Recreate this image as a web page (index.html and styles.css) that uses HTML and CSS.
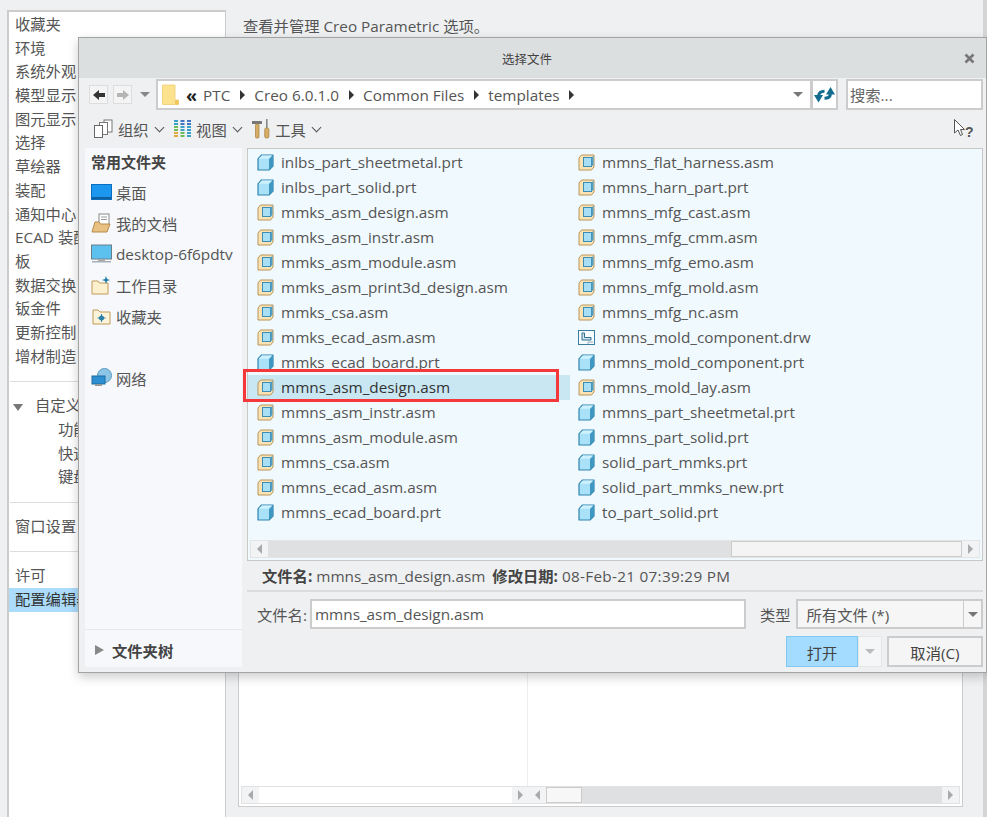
FILE: index.html
```html
<!DOCTYPE html>
<html lang="zh-CN">
<head>
  <meta charset="UTF-8">
  <title>Creo Parametric 选项</title>
  <link rel="stylesheet" href="styles.css">
</head>
<body>

  <svg class="defs" width="0" height="0">
    <symbol id="part" viewBox="0 0 17 17">
      <path d="M1 5 L4.500 1 H16 V12 L12 16 H1 Z" fill="#a9e2f8" stroke="#2f83ad" stroke-width="1.200" stroke-linejoin="round"/>
      <path d="M1.500 4.800 L4.800 1.500 H15 L12 4.800 Z" fill="#cdf1fc"/>
      <path d="M12 5 L16 1 V12 L12 16 Z" fill="#3f97c2"/>
    </symbol>
    <symbol id="asm" viewBox="0 0 17 17">
      <path d="M1 4 L3.500 1 H16 V13 L13.500 16 H1 Z" fill="#fbe3b4" stroke="#b8955a" stroke-linejoin="round"/>
      <rect x="5.500" y="3.500" width="8" height="9" fill="#a9dff5" stroke="#3b8db5"/>
      <path d="M13.500 3.500 L15.500 1.800 V11 L13.500 12.500 Z" fill="#4f9fc6"/>
    </symbol>
    <symbol id="drw" viewBox="0 0 17 17">
      <rect x="0.500" y="1.500" width="16" height="14" fill="#f6fbfd" stroke="#3b7da0"/>
      <path d="M4 4 V11 H13 V8.500 H6.500 V4 Z" fill="#cfe3ee" stroke="#2f6f92"/>
      <path d="M10 15 V13 H15" fill="none" stroke="#99aabb"/>
    </symbol>
  </svg>

  <div class="app">
    <ul class="side">
      <li>收藏夹</li>
      <li>环境</li>
      <li>系统外观</li>
      <li>模型显示</li>
      <li>图元显示</li>
      <li>选择</li>
      <li>草绘器</li>
      <li>装配</li>
      <li>通知中心</li>
      <li>ECAD 装配</li>
      <li>板</li>
      <li>数据交换</li>
      <li>钣金件</li>
      <li>更新控制</li>
      <li>增材制造</li>
      <li class="side-rule rule-wide"></li>
      <li class="side-group"><span class="down"></span>自定义</li>
      <li class="side-sub">功能区</li>
      <li class="side-sub">快速访问</li>
      <li class="side-sub">键盘</li>
      <li class="side-rule rule-mid"></li>
      <li>窗口设置</li>
      <li class="side-rule rule-wide"></li>
      <li>许可</li>
      <li class="side-on">配置编辑器</li>
    </ul>

    <div class="pane">
      <p class="intro">查看并管理 Creo Parametric 选项。</p>
      <div class="table">
        <div class="table-body"></div>
        <div class="table-bars">
          <div class="bar bar-left">
            <span class="bar-btn"><i class="tri-l"></i></span>
            <span class="bar-fill"></span>
            <span class="bar-btn"><i class="tri-r"></i></span>
          </div>
          <div class="bar bar-right">
            <span class="bar-btn"><i class="tri-l"></i></span>
            <span class="bar-thumb"></span>
            <span class="bar-track"></span>
            <span class="bar-btn"><i class="tri-r"></i></span>
          </div>
        </div>
      </div>
    </div>

    <div class="edge"></div>
  </div>

  <div class="dialog">
    <div class="titlebar">
      <span></span>
      <span class="title">选择文件</span>
      <svg class="close" width="11" height="11" viewBox="0 0 11 11"><path d="M1.500 1.500 L9.500 9.500 M9.500 1.500 L1.500 9.500" stroke="#777" stroke-width="2.600"/></svg>
    </div>

    <div class="addr-row">
      <span class="nav-btn"><svg width="14" height="12" viewBox="0 0 14 12"><path d="M1 6 L7 1 V4 H13 V8 H7 V11 Z" fill="#333"/></svg></span>
      <span class="nav-btn off"><svg width="14" height="12" viewBox="0 0 14 12"><path d="M13 6 L7 1 V4 H1 V8 H7 V11 Z" fill="#b5b5b5"/></svg></span>
      <i class="tri-d hist"></i>
      <div class="addr">
        <svg class="addr-folder" width="17" height="21" viewBox="0 0 17 21"><path d="M0.500 1 H13 V16 H16.500 V20.500 H0.500 Z" fill="#fde28e" stroke="#f0d483"/><rect x="13" y="16" width="3.500" height="4.500" fill="#f1c65c"/></svg>
        <span class="crumb-more">«</span>
        <span class="crumb">PTC</span><i class="tri-r dark"></i>
        <span class="crumb">Creo 6.0.1.0</span><i class="tri-r dark"></i>
        <span class="crumb">Common Files</span><i class="tri-r dark"></i>
        <span class="crumb">templates</span><i class="tri-r dark"></i>
        <i class="tri-d addr-drop"></i>
      </div>
      <span class="refresh">
        <svg width="21" height="18" viewBox="0 0 21 18">
          <path d="M10.500 5.200 Q5 5.200 4.500 10 M10.500 12.300 Q16 12.300 16.500 8" fill="none" stroke="#146c8f" stroke-width="3"/>
          <path d="M0 9 H9 L4.500 16.500 Z M12 8.500 H21 L16.500 1 Z" fill="#146c8f"/>
        </svg>
      </span>
      <input class="search" type="text" placeholder="搜索...">
    </div>

    <div class="tool-row">
      <span class="tool">
        <svg width="21" height="20" viewBox="0 0 21 20"><rect x="11" y="1" width="8" height="12" fill="#fff" stroke="#777"/><rect x="6.500" y="3.500" width="8" height="12" fill="#fff" stroke="#777"/><rect x="1.500" y="6.500" width="8" height="12" fill="#fff" stroke="#666"/></svg>
        组织<i class="chev"></i>
      </span>
      <span class="tool">
        <svg width="19" height="18" viewBox="0 0 19 18">
          <path d="M1 1 H5 M1 4 H5" stroke="#3aa0c8" stroke-width="2"/><path d="M1 7 H5 M1 10 H5" stroke="#6fbb5a" stroke-width="2"/><path d="M1 13 H5 M1 16 H5" stroke="#e0a93d" stroke-width="2"/>
          <path d="M7.500 1 H11.500 M7.500 4 H11.500" stroke="#3f74c4" stroke-width="2"/><path d="M7.500 7 H11.500 M7.500 10 H11.500" stroke="#3aa0c8" stroke-width="2"/><path d="M7.500 13 H11.500 M7.500 16 H11.500" stroke="#6fbb5a" stroke-width="2"/>
          <path d="M14 1 H18 M14 4 H18" stroke="#3f74c4" stroke-width="2"/><path d="M14 7 H18 M14 10 H18" stroke="#3aa0c8" stroke-width="2"/><path d="M14 13 H18 M14 16 H18" stroke="#3aa0c8" stroke-width="2"/>
        </svg>
        视图<i class="chev"></i>
      </span>
      <span class="tool">
        <svg width="20" height="21" viewBox="0 0 20 21"><path d="M1 3 H11 V6 H1 Z" fill="#777"/><rect x="4.500" y="6" width="3.500" height="14" rx="1" fill="#d7ac66" stroke="#a57f3f" stroke-width=".7"/><rect x="15" y="1" width="1.600" height="9" fill="#888"/><rect x="13.700" y="10" width="4.200" height="10" rx="1.500" fill="#d7ac66" stroke="#a57f3f" stroke-width=".7"/></svg>
        工具<i class="chev"></i>
      </span>
      <svg class="whatsthis" width="22" height="21" viewBox="0 0 22 21"><path d="M1.500 1.500 V15 L5 12 L7.500 17.500 L9.500 16.500 L7.500 11.500 H11.500 Z" fill="#fff" stroke="#555"/><text x="12" y="19" class="q">?</text></svg>
    </div>

    <div class="dlg-body">
      <div class="places">
        <div class="places-list">
          <h4>常用文件夹</h4>
          <div class="place">
            <svg width="21" height="16" viewBox="0 0 21 16"><rect x="0.500" y="0.500" width="20" height="15" fill="#1d96f0" stroke="#0b6fc0"/><rect x="1" y="13" width="19" height="2" fill="#0f5f9f"/></svg>
            桌面
          </div>
          <div class="place">
            <svg width="21" height="20" viewBox="0 0 21 20"><rect x="8" y="1" width="10" height="11" fill="#fff" stroke="#888"/><path d="M10 4 H16 M10 6.500 H16" stroke="#999"/><path d="M1 19 L4 9 H8 L9.500 11 H19 L16 19 Z" fill="#e9c183" stroke="#b58a4a"/></svg>
            我的文档
          </div>
          <div class="place">
            <svg width="21" height="20" viewBox="0 0 21 20"><rect x="0.500" y="1" width="20" height="14" fill="#5cc1ef" stroke="#6a7f8c"/><rect x="7" y="15" width="7" height="2" fill="#aaa"/><rect x="1" y="17" width="19" height="1.500" fill="#a5b0b8"/></svg>
            desktop-6f6pdtv
          </div>
          <div class="place">
            <svg width="21" height="20" viewBox="0 0 21 20"><path d="M1 19 V6 H7 L8.500 8 H17 V19 Z" fill="#fdf0cf" stroke="#c09a58"/><path d="M15 1 L16 4 L19 5 L16 6 L15 9 L14 6 L11 5 L14 4 Z" fill="#1b7aa6"/></svg>
            工作目录
          </div>
          <div class="place">
            <svg width="21" height="20" viewBox="0 0 21 20"><path d="M2 18 V4 H7 L9 6 H19 V18 Z" fill="#fdf3d8" stroke="#c09a58"/><circle cx="10.500" cy="12" r="2.500" fill="#2b7fa8"/><path d="M10.500 8 V16 M6.500 12 H14.500" stroke="#2b7fa8"/></svg>
            收藏夹
          </div>
          <div class="place place-far">
            <svg width="21" height="20" viewBox="0 0 21 20"><circle cx="13.500" cy="7.500" r="7" fill="#8cc5e6" stroke="#5a9ac0"/><rect x="1" y="8" width="13" height="8" fill="#2d8fd2" stroke="#1c6ca3"/><rect x="4" y="16" width="7" height="2" fill="#999"/></svg>
            网络
          </div>
        </div>
        <div class="places-foot"><i class="tri-r big"></i>文件夹树</div>
      </div>

      <div class="main">
        <div class="files">
          <div class="file-cols">
            <ul class="col col-a">
              <li><svg class="ico"><use href="#part"/></svg>inlbs_part_sheetmetal.prt</li>
              <li><svg class="ico"><use href="#part"/></svg>inlbs_part_solid.prt</li>
              <li><svg class="ico"><use href="#asm"/></svg>mmks_asm_design.asm</li>
              <li><svg class="ico"><use href="#asm"/></svg>mmks_asm_instr.asm</li>
              <li><svg class="ico"><use href="#asm"/></svg>mmks_asm_module.asm</li>
              <li><svg class="ico"><use href="#asm"/></svg>mmks_asm_print3d_design.asm</li>
              <li><svg class="ico"><use href="#asm"/></svg>mmks_csa.asm</li>
              <li><svg class="ico"><use href="#asm"/></svg>mmks_ecad_asm.asm</li>
              <li><svg class="ico"><use href="#part"/></svg>mmks_ecad_board.prt</li>
              <li class="sel"><svg class="ico"><use href="#asm"/></svg>mmns_asm_design.asm<span class="redbox"></span></li>
              <li><svg class="ico"><use href="#asm"/></svg>mmns_asm_instr.asm</li>
              <li><svg class="ico"><use href="#asm"/></svg>mmns_asm_module.asm</li>
              <li><svg class="ico"><use href="#asm"/></svg>mmns_csa.asm</li>
              <li><svg class="ico"><use href="#asm"/></svg>mmns_ecad_asm.asm</li>
              <li><svg class="ico"><use href="#part"/></svg>mmns_ecad_board.prt</li>
            </ul>
            <ul class="col">
              <li><svg class="ico"><use href="#asm"/></svg>mmns_flat_harness.asm</li>
              <li><svg class="ico"><use href="#asm"/></svg>mmns_harn_part.prt</li>
              <li><svg class="ico"><use href="#asm"/></svg>mmns_mfg_cast.asm</li>
              <li><svg class="ico"><use href="#asm"/></svg>mmns_mfg_cmm.asm</li>
              <li><svg class="ico"><use href="#asm"/></svg>mmns_mfg_emo.asm</li>
              <li><svg class="ico"><use href="#asm"/></svg>mmns_mfg_mold.asm</li>
              <li><svg class="ico"><use href="#asm"/></svg>mmns_mfg_nc.asm</li>
              <li><svg class="ico"><use href="#drw"/></svg>mmns_mold_component.drw</li>
              <li><svg class="ico"><use href="#part"/></svg>mmns_mold_component.prt</li>
              <li><svg class="ico"><use href="#asm"/></svg>mmns_mold_lay.asm</li>
              <li><svg class="ico"><use href="#part"/></svg>mmns_part_sheetmetal.prt</li>
              <li><svg class="ico"><use href="#part"/></svg>mmns_part_solid.prt</li>
              <li><svg class="ico"><use href="#part"/></svg>solid_part_mmks.prt</li>
              <li><svg class="ico"><use href="#part"/></svg>solid_part_mmks_new.prt</li>
              <li><svg class="ico"><use href="#part"/></svg>to_part_solid.prt</li>
            </ul>
          </div>
          <div class="hbar">
            <span class="bar-btn"><i class="tri-l"></i></span>
            <span class="hbar-track"></span>
            <span class="hbar-thumb"></span>
            <span class="bar-btn"><i class="tri-r"></i></span>
          </div>
        </div>

        <div class="info">
          <b>文件名:</b> mmns_asm_design.asm
          <b class="info-date">修改日期:</b> <span class="info-stamp">08-Feb-21 07:39:29 PM</span>
        </div>

        <div class="name-row">
          <label class="name-label">文件名:</label>
          <input class="name-input" type="text" value="mmns_asm_design.asm">
          <label class="type-label">类型</label>
          <div class="type-select">
            <span>所有文件 (*)</span>
            <span class="type-drop"><i class="tri-d"></i></span>
          </div>
        </div>

        <div class="btn-row">
          <button class="btn-open">打开</button>
          <span class="btn-more"><i class="tri-d light"></i></span>
          <button class="btn-cancel">取消(C)</button>
        </div>
      </div>
    </div>
  </div>

</body>
</html>
```

FILE: styles.css
```css
* {
  box-sizing: border-box;
}

body {
  margin: 0;
  height: 817px;
  overflow: hidden;
  background-color: #eef0f2;
  color: #555;
  font-family: "Open Sans", "Noto Sans CJK SC", sans-serif;
  font-size: 15.3px;
}

ul {
  list-style: none;
  margin: 0;
  padding: 0;
}

i {
  display: inline-block;
}

.defs {
  position: absolute;
}

/* window behind the dialog */

.app {
  display: flex;
  height: 817px;
  padding: 10px 0 0 7px;
}

.side {
  width: 219px;
  height: 830px;
  padding-top: 1px;
  background-color: #fff;
  border: 2px solid #ccc;
  border-width: 2px 1px 0 2px;
}

.side li {
  height: 23.7px;
  line-height: 23.7px;
  padding-left: 6px;
  white-space: nowrap;
  overflow: hidden;
}

.side .side-rule {
  height: 1px;
  margin: 12px 0 11.500px 1px;
  background-color: #ddd;
  padding: 0;
}

.side .rule-wide {
  margin: 13px 0 12px 1px;
}

.side .rule-mid {
  margin: 12.500px 0 12px 1px;
}

.side .side-group {
  padding-left: 4px;
}

.down {
  display: inline-block;
  margin-right: 12px;
  border-top: 7px solid #777;
  border-left: 5px solid transparent;
  border-right: 5px solid transparent;
}

.side .side-sub {
  padding-left: 49px;
}

.side .side-on {
  background-color: #abdcfb;
  color: #333;
}

.pane {
  flex: 1;
  display: flex;
  flex-direction: column;
  padding: 6px 20px 10px 12px;
}

.intro {
  margin: 0 0 0 5px;
  height: 30px;
  line-height: 20px;
  white-space: nowrap;
}

.table {
  flex: 1;
  display: flex;
  flex-direction: column;
  background-color: #fff;
  border: 1px solid #ccc;
}

.table-body {
  flex: 1;
  margin-left: 288px;
  border-left: 1px solid #eee;
}

.table-bars {
  display: flex;
  height: 18px;
  margin: 0 2px 2px;
  border: 1px solid #e2e2e2;
}

.bar {
  display: flex;
  height: 100%;
}

.bar-left {
  width: 287px;
}

.bar-right {
  flex: 1;
}

.bar-btn {
  display: flex;
  align-items: center;
  justify-content: center;
  width: 17px;
  background-color: #f2f3f4;
}

.bar-fill {
  flex: 1;
  background-color: #fff;
}

.bar-thumb {
  width: 36px;
  background-color: #f7f7f7;
  border: 1px solid #ccc;
}

.bar-track {
  flex: 1;
  background-color: #dfe0e2;
}

.edge {
  width: 4px;
  margin-top: -10px;
  background-color: #d3d5d7;
}

.tri-l, .tri-r {
  border-top: 5px solid transparent;
  border-bottom: 5px solid transparent;
}

.tri-l {
  border-right: 5px solid #aaa;
}

.tri-r {
  border-left: 5px solid #aaa;
}

.tri-d {
  border-top: 5px solid #777;
  border-left: 5px solid transparent;
  border-right: 5px solid transparent;
}

.tri-d.light {
  border-top-color: #bbb;
}

/* file dialog */

.dialog {
  position: absolute;
  left: 78px;
  top: 37px;
  width: 909px;
  height: 636px;
  display: flex;
  flex-direction: column;
  background-color: #eef0f2;
  border: 1px solid #a3a3a3;
  box-shadow: 0 4px 10px rgba(0, 0, 0, 0.2);
}

.titlebar {
  display: grid;
  grid-template-columns: 1fr auto 1fr;
  align-items: center;
  height: 40px;
  padding: 0 11px 0 0;
  background-color: #dcdfe0;
}

.title {
  color: #444;
  font-size: 12.5px;
}

.close {
  justify-self: end;
}

.addr-row {
  display: flex;
  align-items: center;
  height: 33px;
  padding: 0 3px 0 10px;
}

.nav-btn {
  display: flex;
  align-items: center;
  justify-content: center;
  width: 19px;
  height: 19px;
  margin-right: 5px;
  background-color: #f4f4f4;
  border: 1px solid #ddd;
}

.hist {
  margin: 0 6px 0 3px;
  border-top-color: #888;
}

.addr {
  display: flex;
  align-items: center;
  width: 656px;
  height: 31px;
  padding: 0 7px 0 4px;
  background-color: #fff;
  border: 2px solid #ccc;
}

.addr-folder {
  margin-right: 7px;
}

.crumb-more {
  margin-right: 6px;
  color: #222;
  font-size: 18px;
  font-weight: 700;
  line-height: 20px;
}

.tri-r.dark {
  margin: 0 9.500px;
  border-left-color: #333;
}

.addr-drop {
  margin-left: auto;
}

.refresh {
  display: flex;
  align-items: center;
  justify-content: center;
  width: 26px;
  height: 31px;
  background-color: #fff;
  border: 2px solid #ccc;
  border-left-width: 1px;
}

.search {
  width: 137px;
  height: 31px;
  margin-left: 8px;
  padding: 0 2px;
  border: 2px solid #ccc;
  font: inherit;
}

.search::placeholder {
  color: #666;
}

.tool-row {
  display: flex;
  align-items: center;
  height: 37px;
  padding: 0 11px 2px 14px;
}

.tool {
  display: flex;
  align-items: center;
  gap: 4px;
  margin-right: 9.500px;
}

.chev {
  width: 7px;
  height: 7px;
  margin: -3px 1px 0 3px;
  border-right: 1.500px solid #555;
  border-bottom: 1.500px solid #555;
  transform: rotate(45deg);
}

.whatsthis {
  margin-left: auto;
}

.q {
  font-size: 14px;
  font-weight: 700;
  fill: #555;
  font-family: "Liberation Sans", sans-serif;
}

.dlg-body {
  flex: 1;
  display: flex;
  gap: 5px;
  padding: 0 3px 5px 6px;
}

.places {
  display: flex;
  flex-direction: column;
  width: 157px;
  background-color: #f6f8fb;
}

.places-list {
  flex: 1;
  padding: 4px 0 0 6px;
}

.places h4 {
  margin: 0 0 4px;
  height: 20px;
  line-height: 20px;
  font-size: 15px;
  color: #444;
}

.place {
  display: flex;
  align-items: center;
  gap: 4px;
  height: 31px;
  white-space: nowrap;
}

.place-far {
  margin-top: 31px;
}

.places-foot {
  display: flex;
  align-items: center;
  height: 38px;
  padding: 2px 0 0 10px;
  border-top: 1px solid #e6e8ea;
  font-weight: 700;
  color: #444;
}

.tri-r.big {
  margin-right: 8px;
  border-left: 9px solid #888;
}

.main {
  flex: 1;
  display: flex;
  flex-direction: column;
  min-width: 0;
}

.files {
  display: flex;
  flex-direction: column;
  height: 413px;
  background-color: #f0f9fe;
  border: 1px solid #c8c8c8;
}

.file-cols {
  flex: 1;
  display: flex;
  padding-top: 1px;
}

.col-a {
  width: 321px;
}

.col li {
  display: flex;
  align-items: center;
  position: relative;
  height: 25px;
  padding: 0 0 1px 9px;
  white-space: nowrap;
}

.ico {
  width: 17px;
  height: 17px;
  margin-right: 7px;
  flex: none;
}

.col li.sel {
  width: 322px;
  background-color: #c9e7f3;
  color: #333;
}

.redbox {
  position: absolute;
  left: -5px;
  top: -6px;
  width: 316px;
  height: 33px;
  border: 3px solid #f5393b;
}

.hbar {
  display: flex;
  height: 18px;
  margin: 0 2px 2px;
  border: 1px solid #e4e4e4;
  background-color: #dfe0e2;
}

.hbar-track {
  width: 463px;
}

.hbar-thumb {
  flex: 1;
  background-color: #f4f4f4;
  border: 1px solid #ccc;
}

.info {
  height: 31px;
  line-height: 31px;
  padding-left: 15px;
  border-bottom: 2px solid #dcdcdc;
  white-space: nowrap;
}

.info b {
  color: #444;
}

.info-date {
  margin-left: 3px;
}

.info-stamp {
  letter-spacing: 0.3px;
}

.name-row {
  display: flex;
  align-items: center;
  height: 44px;
  padding-left: 10px;
}

.name-label {
  white-space: nowrap;
}

.name-input {
  width: 436px;
  height: 30px;
  margin-left: 3px;
  padding: 0 3px;
  border: 2px solid #ccc;
  color: #555;
  font: inherit;
}

.type-label {
  margin: 0 5px 0 14px;
  white-space: nowrap;
}

.type-select {
  flex: 1;
  display: flex;
  align-items: center;
  justify-content: space-between;
  height: 30px;
  padding-left: 9px;
  background-color: #f6f6f6;
  border: 2px solid #ccc;
}

.type-drop {
  display: flex;
  align-items: center;
  justify-content: center;
  width: 18px;
  height: 100%;
  border-left: 1px solid #ccc;
}

.btn-row {
  display: flex;
  justify-content: flex-end;
  height: 31px;
}

button {
  font: inherit;
  color: #444;
  cursor: pointer;
}

.btn-open {
  width: 72px;
  background-color: #a3dcff;
  border: 1px solid #7fc9f3;
}

.btn-more {
  display: flex;
  align-items: center;
  justify-content: center;
  width: 24px;
  background-color: #f5f6f7;
  border: 1px solid #e6e6e6;
}

.btn-cancel {
  width: 96px;
  margin-left: 5px;
  background-color: #f5f5f5;
  border: 2px solid #ccc;
}
```
